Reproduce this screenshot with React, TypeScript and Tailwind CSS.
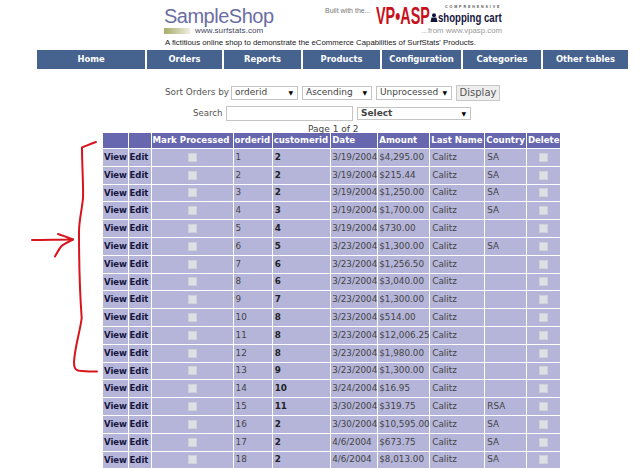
const navItems = [
  { label: 'Home', w: 'w-[108px]' },
  { label: 'Orders', w: 'w-[75px]' },
  { label: 'Reports', w: 'w-[77px]' },
  { label: 'Products', w: 'w-[77px]' },
  { label: 'Configuration', w: 'w-[79px]' },
  { label: 'Categories', w: 'w-[78px]' },
  { label: 'Other tables', w: 'w-[85px]' },
];

const orders = [
  ['1', '2', '3/19/2004', '$4,295.00', 'SA'],
  ['2', '2', '3/19/2004', '$215.44', 'SA'],
  ['3', '2', '3/19/2004', '$1,250.00', 'SA'],
  ['4', '3', '3/19/2004', '$1,700.00', 'SA'],
  ['5', '4', '3/19/2004', '$730.00', ''],
  ['6', '5', '3/23/2004', '$1,300.00', 'SA'],
  ['7', '6', '3/23/2004', '$1,256.50', ''],
  ['8', '6', '3/23/2004', '$3,040.00', ''],
  ['9', '7', '3/23/2004', '$1,300.00', ''],
  ['10', '8', '3/23/2004', '$514.00', ''],
  ['11', '8', '3/23/2004', '$12,006.25', ''],
  ['12', '8', '3/23/2004', '$1,980.00', ''],
  ['13', '9', '3/23/2004', '$1,300.00', ''],
  ['14', '10', '3/24/2004', '$16.95', ''],
  ['15', '11', '3/30/2004', '$319.75', 'RSA'],
  ['16', '2', '3/30/2004', '$10,595.00', 'SA'],
  ['17', '2', '4/6/2004', '$673.75', 'SA'],
  ['18', '2', '4/6/2004', '$8,013.00', 'SA'],
];

const headers = ['', '', 'Mark Processed', 'orderid', 'customerid', 'Date', 'Amount', 'Last Name', 'Country', 'Delete'];
const colWidths = [25.5, 23, 82, 39, 58.5, 47, 52, 55, 41.5, 34];

function Dropdown({ value, className, bold }: { value: string; className: string; bold?: boolean }) {
  return (
    <div className={`relative ${className}`}>
      <select
        defaultValue={value}
        className={`block h-full w-full appearance-none rounded-none border border-[#c4c4c4] bg-white pl-[3px] text-[9px] leading-none text-[#444] ${bold ? 'font-bold' : ''}`}
      >
        <option>{value}</option>
      </select>
      <span className="pointer-events-none absolute right-[5px] top-1/2 -translate-y-1/2 text-[6px] leading-none text-black">▼</span>
    </div>
  );
}

function Tick() {
  return <input type="checkbox" disabled className="mx-auto block h-[9px] w-[9px] appearance-none border border-[#d0d0d8] bg-[#dfdfe6]" />;
}

function Annotations() {
  return (
    <svg className="pointer-events-none absolute left-0 top-0" width="640" height="469" fill="none" stroke="#d8141c" strokeLinecap="round" strokeLinejoin="round">
      <path strokeWidth="2" d="M96 142 C90 144 86 146 82 147.5 C82 165 83.5 185 83 198 C82 210 79 220 79 232 C79 260 80 295 81.7 318 C80 332 75 346 74 362 C74 369 76 371 82 371 C88 371.5 92 371.5 97 371.5" />
      <path strokeWidth="2" d="M32 240 C45 240 60 239.5 73 239.5 C68 237.5 63 235.5 58 234" />
      <path strokeWidth="2" d="M73 239.5 C68 242 64 244 61.5 246 C59 249 57 253 55 256.5" />
    </svg>
  );
}

export default function App() {
  return (
    <div className="relative h-[469px] w-[640px] overflow-hidden bg-white font-['DejaVu_Sans',sans-serif] text-[#333]">
      {/* masthead */}
      <div className="flex h-[50px] pl-[164px]">
        <div className="w-[161px] pt-[5px]">
          <div className="font-['Liberation_Sans',sans-serif] text-[20px] leading-[23px] tracking-[-0.5px] text-[#6b6da3]">SampleShop</div>
          <div className="flex h-[6px] items-center">
            <div className="h-[6px] w-[26px] bg-gradient-to-r from-[#a8ab68] to-[#eeeedd]" />
            <span className="ml-[5px] whitespace-nowrap font-['Liberation_Sans',sans-serif] text-[8px] leading-none tracking-[0.1px] text-[#44465e]">www.surfstats.com</span>
          </div>
          <div className="ml-[1px] mt-[4px] w-[320px] whitespace-nowrap font-['Liberation_Sans',sans-serif] text-[7.8px] leading-[10px] text-[#222]">
            A fictitious online shop to demonstrate the eCommerce Capabilities of SurfStats' Products.
          </div>
        </div>
        <div className="mt-[7px] h-[8px] w-[51px] whitespace-nowrap font-['Liberation_Sans',sans-serif] text-[7px] leading-[8px] text-[#777]">Built with the...</div>
        <div className="mt-[6px] w-[126px] font-['Liberation_Sans',sans-serif]">
          <div className="flex h-[20px]">
            <span className="w-[54px] origin-left scale-x-[0.6] whitespace-nowrap text-[24px] font-bold leading-[20px] text-[#c8101c]">VP•ASP</span>
            <div className="w-[72px]">
              <div className="-mt-[1px] h-[5px] whitespace-nowrap pl-[15px] text-[3.6px] font-bold leading-[5px] tracking-[1.9px] text-[#555]">COMPREHENSIVE</div>
              <div className="mt-[2.5px] flex items-center">
                <svg width="8" height="10" viewBox="0 0 8 10" className="shrink-0">
                  <circle cx="4" cy="2.2" r="2" fill="#14143c" />
                  <path d="M0.5 9 L1.5 4.6 L6.5 4.6 L7.5 9 Z" fill="#14143c" />
                </svg>
                <span className="w-[64px] origin-left scale-x-[0.74] whitespace-nowrap text-[13px] font-bold leading-[10px] text-[#14143c]">shopping cart</span>
              </div>
            </div>
          </div>
          <div className="mt-[1px] text-right text-[7.8px] leading-[7px] text-[#999]">...from www.vpasp.com</div>
        </div>
      </div>

      {/* main nav */}
      <div className="ml-[37px] flex h-[19px] gap-[2px]">
        {navItems.map((item) => (
          <div key={item.label} className={`${item.w} flex items-center justify-center bg-[#46628f] text-[8.4px] font-bold text-white`}>
            {item.label}
          </div>
        ))}
      </div>

      {/* filters */}
      <div className="ml-[165px] mt-[16px] flex h-[15px] items-center">
        <span className="w-[66px] whitespace-nowrap text-[8.8px] text-[#555]">Sort Orders by</span>
        <Dropdown value="orderid" className="h-[14px] w-[67px]" />
        <Dropdown value="Ascending" className="ml-[4px] h-[14px] w-[70px]" />
        <Dropdown value="Unprocessed" className="ml-[4px] h-[14px] w-[76px]" />
        <button className="ml-[4px] h-[16px] w-[44px] border border-[#c8c8c8] bg-[#eeeeee] text-[10px] leading-none text-[#555]">Display</button>
      </div>
      <div className="ml-[193px] mt-[6px] flex h-[15px] items-center">
        <span className="w-[33px] text-[8.6px] text-[#555]">Search</span>
        <input className="h-[15px] w-[127px] border border-[#c4c4c4] bg-white" />
        <Dropdown value="Select" bold className="ml-[4px] h-[13px] w-[114px]" />
      </div>
      <div className="mt-[3px] h-[9px] pl-[308px] text-[9px] leading-[11px] text-[#444]">Page 1 of 2</div>

      {/* orders table */}
      <table className="ml-[103px] w-[458px] table-fixed border-separate border-spacing-0 text-[8.8px]">
        <colgroup>
          {colWidths.map((w, i) => (
            <col key={i} style={{ width: w }} />
          ))}
        </colgroup>
        <thead>
          <tr>
            {headers.map((h, i) => (
              <th key={i} className="h-[15px] whitespace-nowrap border-r border-white bg-[#6767b0] px-[1px] text-left text-[8.6px] font-bold leading-none text-white">
                {h}
              </th>
            ))}
          </tr>
        </thead>
        <tbody>
          {orders.map((row) => (
            <tr key={row[0]}>
              <td className="h-[17.8px] border-r border-t border-white bg-[#b5b5d9] px-[1px] text-[8.5px] font-bold text-[#14143c]">View</td>
              <td className="border-r border-t border-white bg-[#b5b5d9] px-[1px] text-[8.5px] font-bold text-[#14143c]">Edit</td>
              <td className="border-r border-t border-white bg-[#b5b5d9]"><Tick /></td>
              <td className="border-r border-t border-white bg-[#b5b5d9] px-[2px] text-[#444]">{row[0]}</td>
              <td className="border-r border-t border-white bg-[#b5b5d9] px-[2px] font-bold text-[#222]">{row[1]}</td>
              <td className="whitespace-nowrap border-r border-t border-white bg-[#b5b5d9] px-[1px] text-[#444]">{row[2]}</td>
              <td className="whitespace-nowrap border-r border-t border-white bg-[#b5b5d9] px-[1px] text-[#444]">{row[3]}</td>
              <td className="border-r border-t border-white bg-[#b5b5d9] px-[2px] text-[#444]">Calitz</td>
              <td className="border-r border-t border-white bg-[#b5b5d9] px-[2px] text-[#444]">{row[4]}</td>
              <td className="border-r border-t border-white bg-[#b5b5d9]"><Tick /></td>
            </tr>
          ))}
        </tbody>
      </table>

      <Annotations />
    </div>
  );
}
